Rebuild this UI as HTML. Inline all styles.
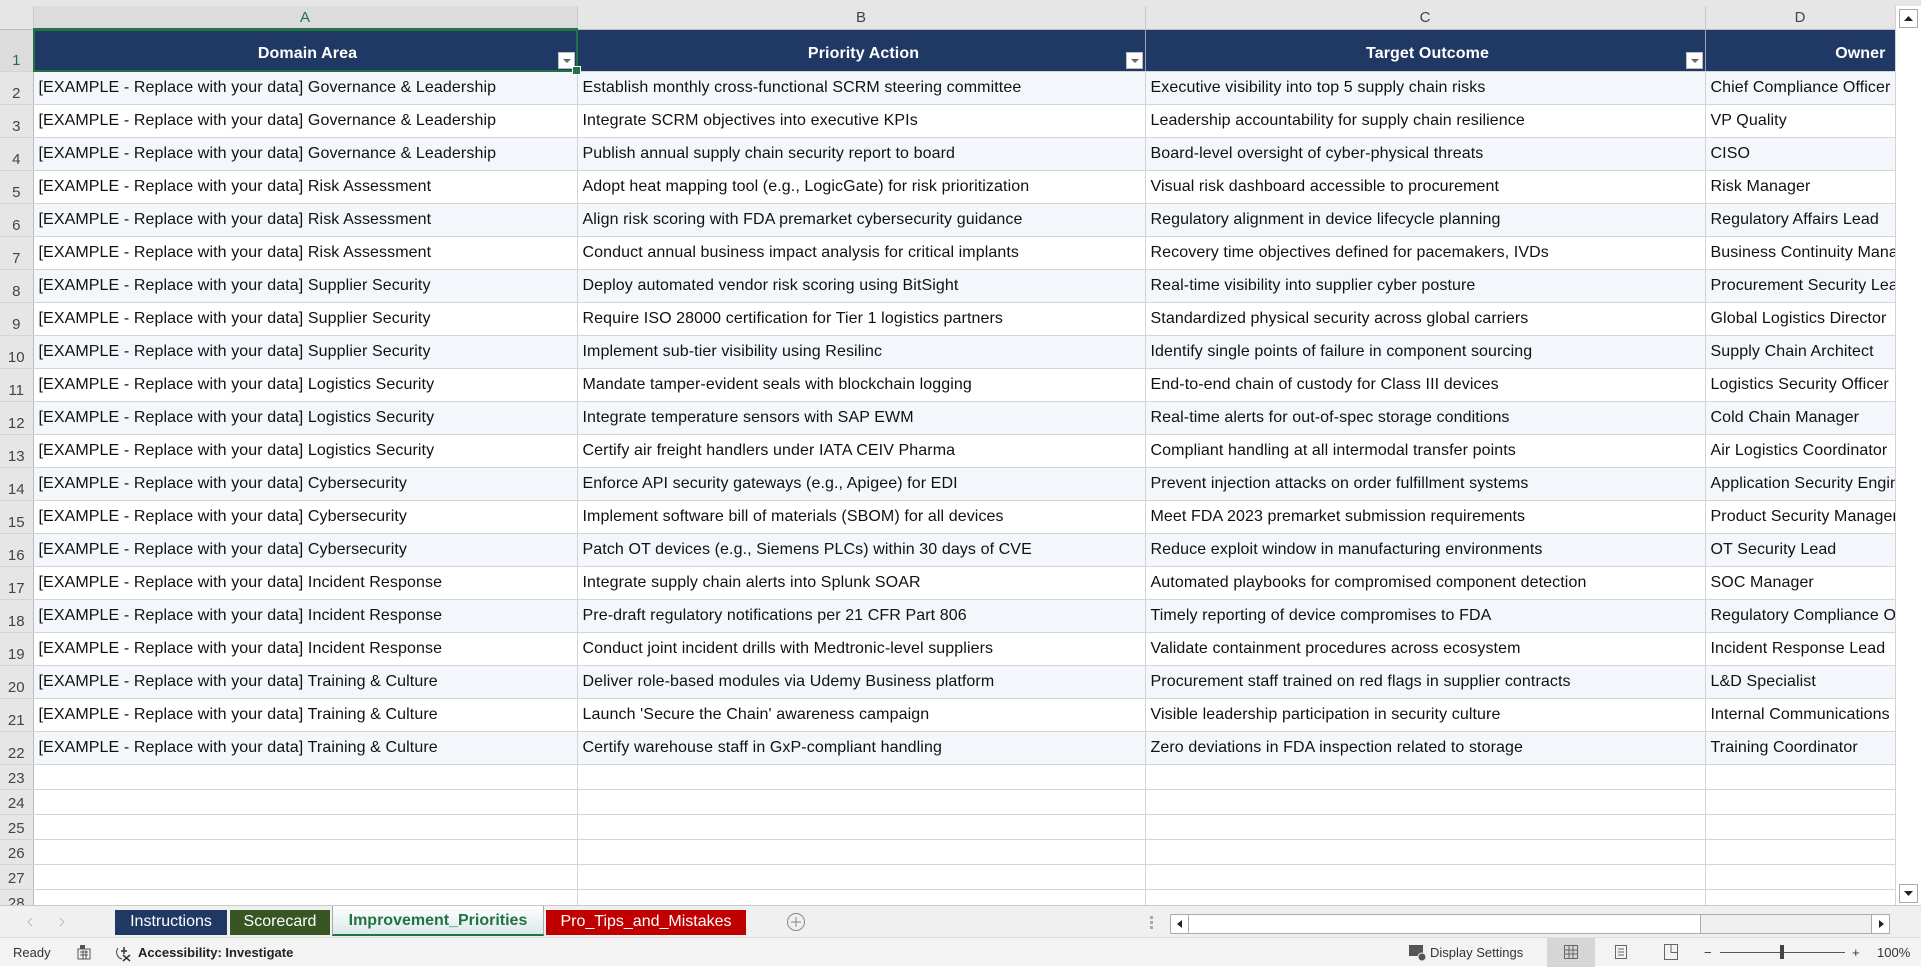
<!DOCTYPE html>
<html><head><meta charset="utf-8">
<style>
*{box-sizing:border-box;margin:0;padding:0}
body{width:1921px;height:966px;overflow:hidden;background:#fff;font-family:"Liberation Sans",Arial,sans-serif;position:relative}
#top{position:absolute;left:0;top:0;width:1921px;height:6px;background:#e6e6e6}
#grid{position:absolute;left:0;top:6px;width:1895px;height:899px;overflow:hidden}
table{border-collapse:collapse;table-layout:fixed;width:1895px}
td{border-right:1px solid #d4d4d4;border-bottom:1px solid #d4d4d4;font-size:16px;letter-spacing:0.1px;color:#111;white-space:nowrap;overflow:hidden;padding:0 0 0 5px;vertical-align:middle}
tr.ch td{background:#e6e6e6;height:23px;text-align:center;color:#444;font-size:15px;padding:0;letter-spacing:0;border-right:1px solid #c8c8c8;border-bottom:1px solid #bdbdbd}
td.rh{background:#e6e6e6;color:#444;text-align:center;padding:0 0 2px 0;vertical-align:bottom;font-size:15px;letter-spacing:0;border-right:1px solid #bdbdbd}
tr.h td{height:42px}
tr.h td.c{background:#203864;color:#fff;font-weight:bold;text-align:center;position:relative;border-right:1px solid #9aa6bb;vertical-align:bottom;padding-bottom:8px}
tr.d td{height:33px}
tr.d:nth-child(odd) td.c{background:#f3f7fc}
tr.e td{height:25px}
.fb{position:absolute;right:2px;bottom:2px;width:17px;height:17px;background:#fff;border:1px solid #bbb}
.fb:after{content:"";position:absolute;left:4px;top:6px;border-left:4px solid transparent;border-right:4px solid transparent;border-top:4px solid #666}
#sel{position:absolute;left:33px;top:29px;width:545px;height:43px;border:2px solid #217346;pointer-events:none}
#sel:after{content:"";position:absolute;right:-5px;bottom:-5px;width:7px;height:7px;background:#217346;border:1px solid #fff}
#vs{position:absolute;left:1895px;top:6px;width:26px;height:899px;background:#fff;border-left:1px solid #d4d4d4}
#vs .a{position:absolute;left:3px;width:19px;height:19px;border:1px solid #aaa;background:#fff}
#tabs{position:absolute;left:0;top:905px;width:1921px;height:32px;background:#f0f0f0;border-top:1px solid #c8c8c8}
.tab{position:absolute;top:4px;height:25px;font-size:16px;color:#fff;text-align:center;line-height:24px}
#status{position:absolute;left:0;top:937px;width:1921px;height:29px;background:#f3f3f3;border-top:1px solid #ddd;font-size:13px;color:#333}
#status span{position:absolute;top:7px}
</style></head><body>
<div id="top"></div>
<div id="grid">
<table>
<colgroup><col style="width:33px"><col style="width:544px"><col style="width:568px"><col style="width:560px"><col style="width:190px"></colgroup>
<tr class="ch"><td style="border-bottom:1px solid #bdbdbd"></td><td style="color:#217346;border-bottom:2px solid #217346;background:#dcdcdc">A</td><td>B</td><td>C</td><td>D</td></tr>
<tr class="h"><td class="rh" style="color:#217346;background:#dcdcdc">1</td><td class="c">Domain Area<div class="fb"></div></td><td class="c">Priority Action<div class="fb"></div></td><td class="c">Target Outcome<div class="fb"></div></td><td class="c" style="text-align:right;padding-right:9px">Owner</td></tr>
<tr class="d"><td class="rh">2</td><td class="c">[EXAMPLE - Replace with your data] Governance &amp; Leadership</td><td class="c">Establish monthly cross-functional SCRM steering committee</td><td class="c">Executive visibility into top 5 supply chain risks</td><td class="c">Chief Compliance Officer</td></tr>
<tr class="d"><td class="rh">3</td><td class="c">[EXAMPLE - Replace with your data] Governance &amp; Leadership</td><td class="c">Integrate SCRM objectives into executive KPIs</td><td class="c">Leadership accountability for supply chain resilience</td><td class="c">VP Quality</td></tr>
<tr class="d"><td class="rh">4</td><td class="c">[EXAMPLE - Replace with your data] Governance &amp; Leadership</td><td class="c">Publish annual supply chain security report to board</td><td class="c">Board-level oversight of cyber-physical threats</td><td class="c">CISO</td></tr>
<tr class="d"><td class="rh">5</td><td class="c">[EXAMPLE - Replace with your data] Risk Assessment</td><td class="c">Adopt heat mapping tool (e.g., LogicGate) for risk prioritization</td><td class="c">Visual risk dashboard accessible to procurement</td><td class="c">Risk Manager</td></tr>
<tr class="d"><td class="rh">6</td><td class="c">[EXAMPLE - Replace with your data] Risk Assessment</td><td class="c">Align risk scoring with FDA premarket cybersecurity guidance</td><td class="c">Regulatory alignment in device lifecycle planning</td><td class="c">Regulatory Affairs Lead</td></tr>
<tr class="d"><td class="rh">7</td><td class="c">[EXAMPLE - Replace with your data] Risk Assessment</td><td class="c">Conduct annual business impact analysis for critical implants</td><td class="c">Recovery time objectives defined for pacemakers, IVDs</td><td class="c">Business Continuity Manager</td></tr>
<tr class="d"><td class="rh">8</td><td class="c">[EXAMPLE - Replace with your data] Supplier Security</td><td class="c">Deploy automated vendor risk scoring using BitSight</td><td class="c">Real-time visibility into supplier cyber posture</td><td class="c">Procurement Security Lead</td></tr>
<tr class="d"><td class="rh">9</td><td class="c">[EXAMPLE - Replace with your data] Supplier Security</td><td class="c">Require ISO 28000 certification for Tier 1 logistics partners</td><td class="c">Standardized physical security across global carriers</td><td class="c">Global Logistics Director</td></tr>
<tr class="d"><td class="rh">10</td><td class="c">[EXAMPLE - Replace with your data] Supplier Security</td><td class="c">Implement sub-tier visibility using Resilinc</td><td class="c">Identify single points of failure in component sourcing</td><td class="c">Supply Chain Architect</td></tr>
<tr class="d"><td class="rh">11</td><td class="c">[EXAMPLE - Replace with your data] Logistics Security</td><td class="c">Mandate tamper-evident seals with blockchain logging</td><td class="c">End-to-end chain of custody for Class III devices</td><td class="c">Logistics Security Officer</td></tr>
<tr class="d"><td class="rh">12</td><td class="c">[EXAMPLE - Replace with your data] Logistics Security</td><td class="c">Integrate temperature sensors with SAP EWM</td><td class="c">Real-time alerts for out-of-spec storage conditions</td><td class="c">Cold Chain Manager</td></tr>
<tr class="d"><td class="rh">13</td><td class="c">[EXAMPLE - Replace with your data] Logistics Security</td><td class="c">Certify air freight handlers under IATA CEIV Pharma</td><td class="c">Compliant handling at all intermodal transfer points</td><td class="c">Air Logistics Coordinator</td></tr>
<tr class="d"><td class="rh">14</td><td class="c">[EXAMPLE - Replace with your data] Cybersecurity</td><td class="c">Enforce API security gateways (e.g., Apigee) for EDI</td><td class="c">Prevent injection attacks on order fulfillment systems</td><td class="c">Application Security Engineer</td></tr>
<tr class="d"><td class="rh">15</td><td class="c">[EXAMPLE - Replace with your data] Cybersecurity</td><td class="c">Implement software bill of materials (SBOM) for all devices</td><td class="c">Meet FDA 2023 premarket submission requirements</td><td class="c">Product Security Manager</td></tr>
<tr class="d"><td class="rh">16</td><td class="c">[EXAMPLE - Replace with your data] Cybersecurity</td><td class="c">Patch OT devices (e.g., Siemens PLCs) within 30 days of CVE</td><td class="c">Reduce exploit window in manufacturing environments</td><td class="c">OT Security Lead</td></tr>
<tr class="d"><td class="rh">17</td><td class="c">[EXAMPLE - Replace with your data] Incident Response</td><td class="c">Integrate supply chain alerts into Splunk SOAR</td><td class="c">Automated playbooks for compromised component detection</td><td class="c">SOC Manager</td></tr>
<tr class="d"><td class="rh">18</td><td class="c">[EXAMPLE - Replace with your data] Incident Response</td><td class="c">Pre-draft regulatory notifications per 21 CFR Part 806</td><td class="c">Timely reporting of device compromises to FDA</td><td class="c">Regulatory Compliance Officer</td></tr>
<tr class="d"><td class="rh">19</td><td class="c">[EXAMPLE - Replace with your data] Incident Response</td><td class="c">Conduct joint incident drills with Medtronic-level suppliers</td><td class="c">Validate containment procedures across ecosystem</td><td class="c">Incident Response Lead</td></tr>
<tr class="d"><td class="rh">20</td><td class="c">[EXAMPLE - Replace with your data] Training &amp; Culture</td><td class="c">Deliver role-based modules via Udemy Business platform</td><td class="c">Procurement staff trained on red flags in supplier contracts</td><td class="c">L&amp;D Specialist</td></tr>
<tr class="d"><td class="rh">21</td><td class="c">[EXAMPLE - Replace with your data] Training &amp; Culture</td><td class="c">Launch 'Secure the Chain' awareness campaign</td><td class="c">Visible leadership participation in security culture</td><td class="c">Internal Communications</td></tr>
<tr class="d"><td class="rh">22</td><td class="c">[EXAMPLE - Replace with your data] Training &amp; Culture</td><td class="c">Certify warehouse staff in GxP-compliant handling</td><td class="c">Zero deviations in FDA inspection related to storage</td><td class="c">Training Coordinator</td></tr>
<tr class="e"><td class="rh">23</td><td></td><td></td><td></td><td></td></tr>
<tr class="e"><td class="rh">24</td><td></td><td></td><td></td><td></td></tr>
<tr class="e"><td class="rh">25</td><td></td><td></td><td></td><td></td></tr>
<tr class="e"><td class="rh">26</td><td></td><td></td><td></td><td></td></tr>
<tr class="e"><td class="rh">27</td><td></td><td></td><td></td><td></td></tr>
<tr class="e"><td class="rh">28</td><td></td><td></td><td></td><td></td></tr>
</table>
</div>
<div id="sel"></div>
<div id="vs">
<div class="a" style="top:3px"><svg width="17" height="17"><path d="M4 11 L8.5 6 L13 11Z" fill="#222"/></svg></div>
<div class="a" style="top:878px"><svg width="17" height="17"><path d="M4 6 L8.5 11 L13 6Z" fill="#222"/></svg></div>
</div>
<div id="tabs">
<svg style="position:absolute;left:26px;top:10px" width="40" height="12"><path d="M6 2 L2 6 L6 10" stroke="#bbb" fill="none"/><path d="M34 2 L38 6 L34 10" stroke="#bbb" fill="none"/></svg>
<div class="tab" style="left:115px;width:112px;background:#203864">Instructions</div>
<div class="tab" style="left:230px;width:100px;background:#375623">Scorecard</div>
<div class="tab" style="left:332px;width:212px;top:0;height:30px;background:linear-gradient(#fff,#dbe9e9);color:#217346;font-weight:bold;line-height:30px;border-bottom:2px solid #217346;border-left:1px solid #aaa;border-right:1px solid #aaa">Improvement_Priorities</div>
<div class="tab" style="left:546px;width:200px;background:#c00000">Pro_Tips_and_Mistakes</div>
<svg style="position:absolute;left:786px;top:6px" width="20" height="20"><circle cx="10" cy="10" r="8.5" stroke="#888" fill="none"/><path d="M10 5V15M5 10H15" stroke="#888"/></svg>
<div style="position:absolute;left:1150px;top:10px;width:3px;height:3px;background:#aaa;box-shadow:0 5px #aaa,0 10px #aaa"></div>
<div style="position:absolute;left:1170px;top:8px;width:720px;height:20px;border:1px solid #aaa;background:#f0f0f0">
 <div style="position:absolute;left:0;top:0;width:18px;height:18px;background:#fff;border-right:1px solid #aaa"><svg width="18" height="18"><path d="M11 5 L6 9 L11 13Z" fill="#222"/></svg></div>
 <div style="position:absolute;left:18px;top:0;width:512px;height:18px;background:#fff;border-right:1px solid #aaa"></div>
 <div style="position:absolute;right:0;top:0;width:18px;height:18px;background:#fff;border-left:1px solid #aaa"><svg width="18" height="18"><path d="M7 5 L12 9 L7 13Z" fill="#222"/></svg></div>
</div>
</div>
<div id="status">
<span style="left:13px">Ready</span>
<svg style="position:absolute;left:76px;top:6px" width="16" height="16"><rect x="2" y="5" width="12" height="10" fill="none" stroke="#555"/><rect x="4" y="1" width="5" height="4" fill="#555"/><path d="M4 8h8M4 11h8M7 6v9M10 6v9" stroke="#555"/></svg>
<svg style="position:absolute;left:114px;top:6px" width="20" height="18"><path d="M4 4 A7 7 0 0 0 8 15" stroke="#444" fill="none"/><path d="M10 3 V10 M7 7 H13 M9 11 L16 17 M16 11 L9 17" stroke="#333" stroke-width="1.5"/></svg>
<span style="left:138px;font-weight:bold;color:#222">Accessibility: Investigate</span>
<svg style="position:absolute;left:1408px;top:5px" width="20" height="20"><rect x="1" y="2" width="14" height="11" fill="#555"/><circle cx="14" cy="14" r="4" fill="#555" stroke="#f3f3f3"/></svg>
<span style="left:1430px">Display Settings</span>
<div style="position:absolute;left:1547px;top:0;width:48px;height:29px;background:#d6d6d6"></div>
<svg style="position:absolute;left:1563px;top:6px" width="16" height="16"><path d="M1.5 1.5h13v13h-13zM1.5 6h13M1.5 10h13M6 1.5v13M10 1.5v13" stroke="#666" fill="none"/></svg>
<svg style="position:absolute;left:1613px;top:6px" width="16" height="16"><path d="M2.5 1.5h11v13h-11zM5 5h6M5 8h6M5 11h6" stroke="#666" fill="none"/></svg>
<svg style="position:absolute;left:1663px;top:5px" width="16" height="18"><path d="M1.5 1.5h13v15h-13zM8 1.5v8h6.5" stroke="#666" fill="none"/></svg>
<span style="left:1704px">−</span>
<div style="position:absolute;left:1720px;top:14px;width:125px;height:1px;background:#555"></div>
<div style="position:absolute;left:1780px;top:7px;width:4px;height:14px;background:#444"></div>
<span style="left:1852px">+</span>
<span style="left:1877px">100%</span>
</div>
</body></html>
